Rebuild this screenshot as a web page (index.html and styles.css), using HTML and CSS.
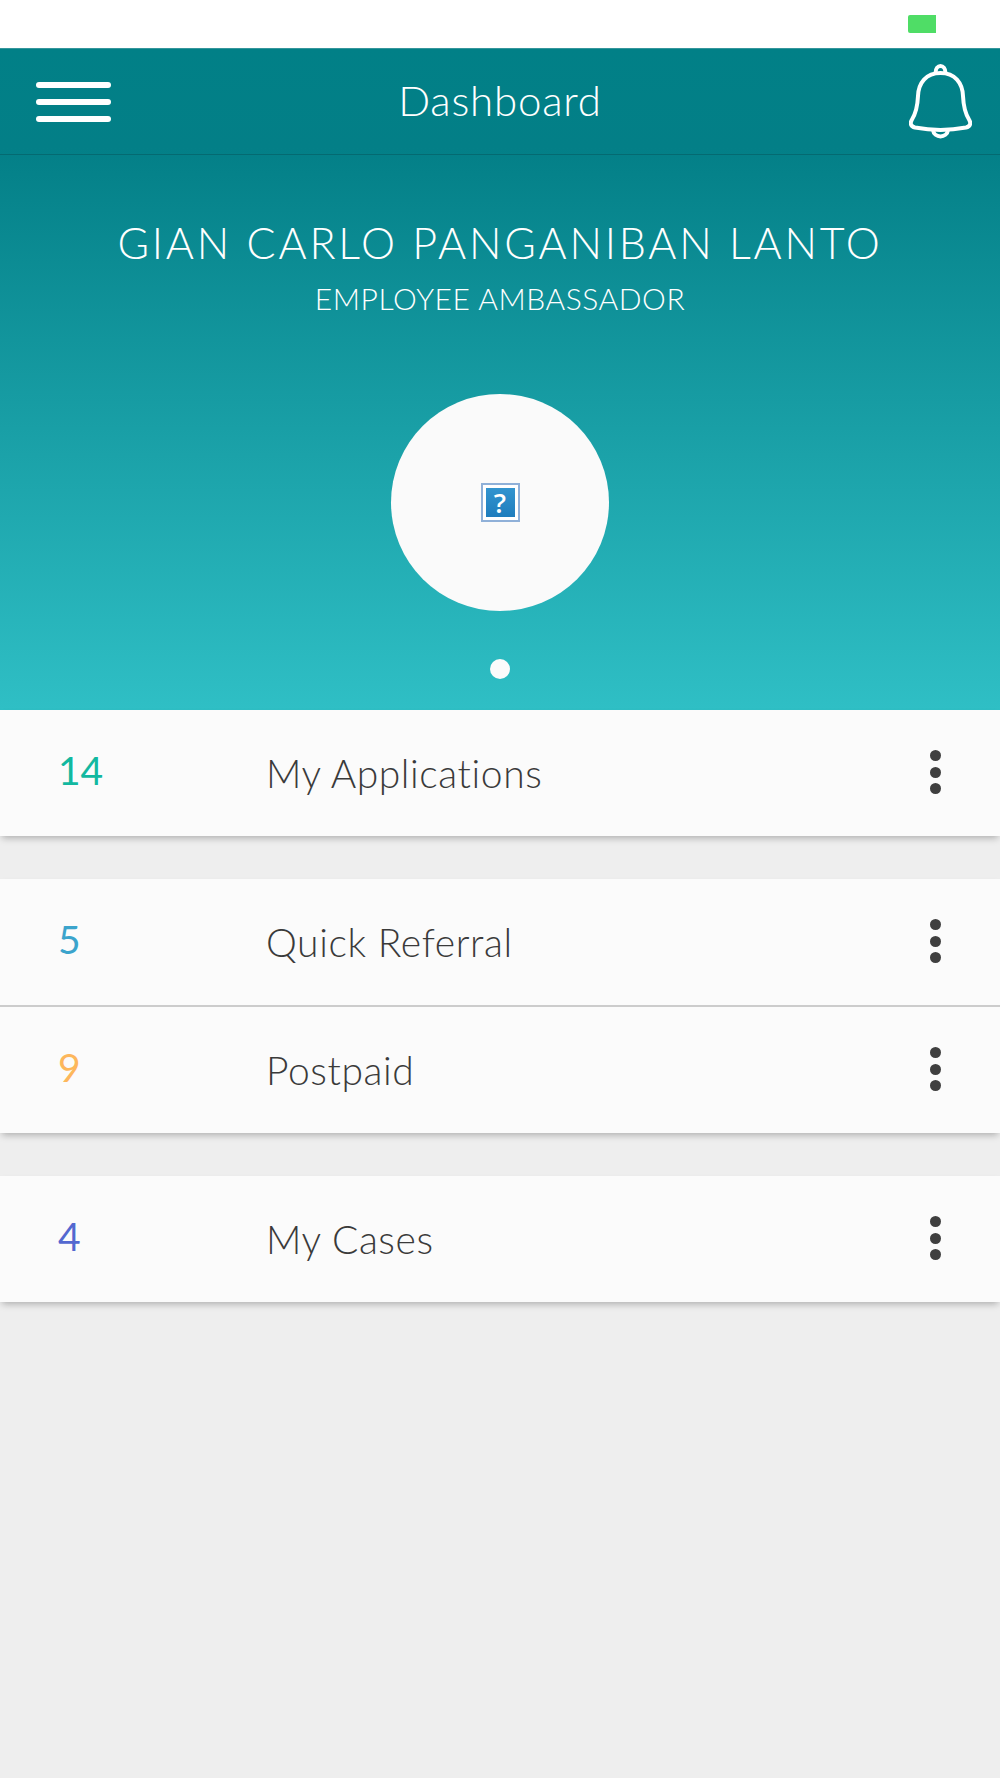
FILE: index.html
```html
<!DOCTYPE html>
<html lang="en">
<head>
<meta charset="utf-8">
<title>Dashboard</title>
<link rel="stylesheet" href="styles.css">
</head>
<body>
<div class="app">
  <div class="status"><span class="battery"></span></div>
  <div class="hero">
    <header class="toolbar">
      <div class="burger"><span></span><span></span><span></span></div>
      <h1 class="title">Dashboard</h1>
      <svg class="bell" viewBox="0 0 63 76" fill="none" stroke="#fff" stroke-width="4" stroke-linejoin="round" stroke-linecap="round">
        <path d="M26.500 10 C26.500 0.500 36.500 0.500 36.500 10"/>
        <path d="M31.500 10 C17 10 9.500 20 9 33 C8.500 44 7 50 3 56.500 C0.500 60.500 2 63.500 6 64.500 C22 67.500 41 67.500 57 64.500 C61 63.500 62.500 60.500 60 56.500 C56 50 54.500 44 54 33 C53.500 20 46 10 31.500 10 Z"/>
        <path d="M24 67 C25 75.500 38 75.500 39 67"/>
      </svg>
    </header>
    <div class="profile">
      <div class="name">GIAN CARLO PANGANIBAN LANTO</div>
      <div class="role">EMPLOYEE AMBASSADOR</div>
      <div class="avatar"><div class="broken"><span class="broken-inner">?</span></div></div>
      <div class="pager"></div>
    </div>
  </div>
  <main class="lists">
    <section class="card">
      <div class="row"><span class="count c-green">14</span><span class="label">My Applications</span><span class="more"><i></i><i></i><i></i></span></div>
    </section>
    <section class="card">
      <div class="row"><span class="count c-blue">5</span><span class="label">Quick Referral</span><span class="more"><i></i><i></i><i></i></span></div>
      <div class="row row-top"><span class="count c-orange">9</span><span class="label">Postpaid</span><span class="more"><i></i><i></i><i></i></span></div>
    </section>
    <section class="card">
      <div class="row"><span class="count c-indigo">4</span><span class="label">My Cases</span><span class="more"><i></i><i></i><i></i></span></div>
    </section>
  </main>
</div>
</body>
</html>
```
FILE: styles.css
```css
* { box-sizing: border-box; }
html, body { margin: 0; padding: 0; }
body { background: #eeeeee; font-family: "Lato", "Open Sans", sans-serif; font-weight: 300; }
.app { width: 1000px; height: 1778px; display: flex; flex-direction: column; overflow: hidden; }
.status { height: 48px; background: #fff; display: flex; justify-content: flex-end; align-items: flex-start; padding: 15px 64px 0 0; }
.battery { width: 28px; height: 18px; background: #4fdd66; border-radius: 2px 0 0 2px; }
.hero { height: 662px; background: linear-gradient(180deg, #018087 0%, #037f87 15%, #2fbfc5 100%); display: flex; flex-direction: column; }
.toolbar { height: 107px; flex: none; border-top: 1px solid #35969c; border-bottom: 1px solid #046a71; display: grid; grid-template-columns: 1fr auto 1fr; align-items: center; padding: 0 36px; }
.burger { width: 75px; display: flex; flex-direction: column; gap: 11px; }
.burger span { height: 6px; border-radius: 3px; background: #fff; }
.title { margin: -4px 0 0; color: #fff; font-size: 42px; font-weight: 300; line-height: 1; letter-spacing: .8px; }
.bell { width: 63px; height: 76px; justify-self: end; margin: -1px -8px 0 0; }
.profile { flex: 1; display: flex; flex-direction: column; align-items: center; color: #fff; padding-top: 62px; }
.name { font-size: 43px; line-height: 52px; letter-spacing: 2.8px; white-space: nowrap; }
.role { font-size: 30px; line-height: 36px; margin-top: 11px; letter-spacing: .55px; white-space: nowrap; }
.avatar { width: 218px; height: 217px; border-radius: 50%; background: #fafafa; margin-top: 78px; display: flex; align-items: center; justify-content: center; }
.broken { width: 39px; height: 39px; border: 2px solid #8fb0d8; padding: 3px; background: #fff; }
.broken-inner { display: flex; width: 100%; height: 100%; align-items: center; justify-content: center; background: linear-gradient(180deg, #3294cf, #1f7dbd); color: #fff; font: 600 27px/1 "Open Sans", sans-serif; }
.pager { width: 20px; height: 20px; border-radius: 50%; background: #fbfbfb; margin-top: 48px; }
.lists { flex: 1; display: flex; flex-direction: column; gap: 43px; }
.card { background: #fbfbfb; box-shadow: 0 4px 7px -2px rgba(0,0,0,.28); }
.row { height: 126px; display: flex; align-items: center; padding: 0 59px 0 58px; }
.row-top { height: 128px; border-top: 2px solid #cccccc; }
.count { width: 208px; flex: none; font-size: 39px; font-weight: 400; margin-top: -6px; }
.label { flex: 1; font-size: 39px; font-weight: 300; letter-spacing: .6px; color: #3a3a3a; }
.more { width: 11px; display: flex; flex-direction: column; gap: 5.5px; margin-top: -2px; }
.more i { width: 11px; height: 11px; border-radius: 50%; background: #3f3f3f; }
.c-green { color: #12b8a0; }
.c-blue { color: #3ba4cc; }
.c-orange { color: #fdb75c; }
.c-indigo { color: #5368d0; }
```
